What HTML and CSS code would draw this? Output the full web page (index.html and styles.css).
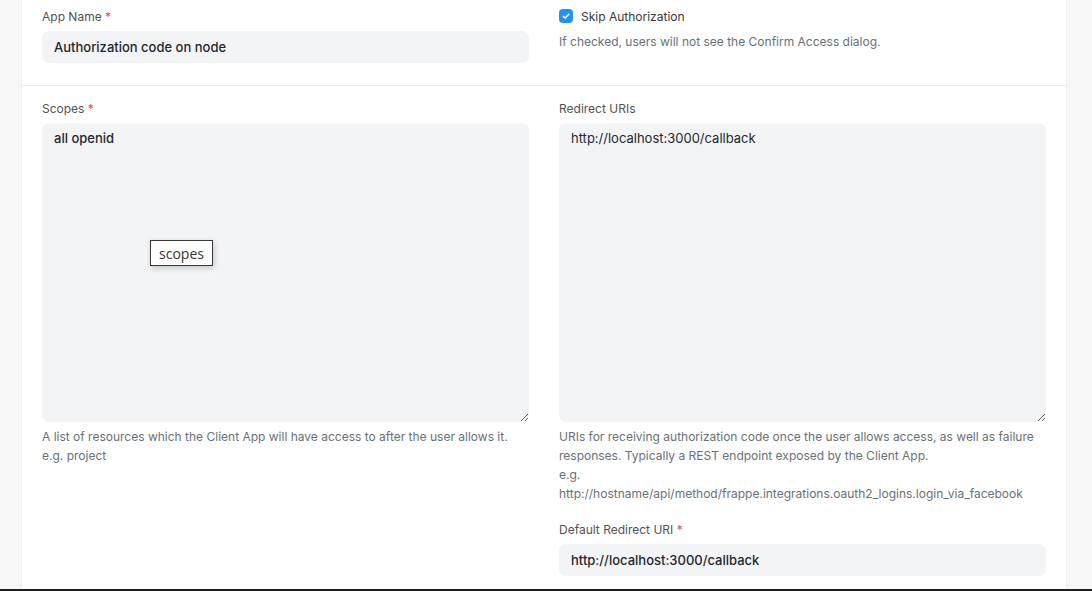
FILE: index.html
```html
<!DOCTYPE html>
<html>
<head>
<meta charset="utf-8">
<link rel="stylesheet" href="styles.css">
</head>
<body>
<div class="page">
  <div class="gutter"></div>
  <main class="card">
    <section class="section first">
      <div class="col">
        <div class="form-group">
          <label class="control-label">App Name <span class="req">*</span></label>
          <div class="input">Authorization code on node</div>
        </div>
      </div>
      <div class="col">
        <div class="form-group">
          <label class="check-row">
            <span class="checkbox"><svg width="10" height="10" viewBox="0 0 10 10"><path d="M2.2 5.2 L4.2 7 L7.8 3.2" fill="none" stroke="#fff" stroke-width="1.5" stroke-linecap="round" stroke-linejoin="round"/></svg></span>
            <span class="check-label">Skip Authorization</span>
          </label>
          <p class="help">If checked, users will not see the Confirm Access dialog.</p>
        </div>
      </div>
    </section>
    <section class="section">
      <div class="col">
        <div class="form-group">
          <label class="control-label">Scopes <span class="req">*</span></label>
          <div class="ta-wrap">
            <textarea class="textarea" readonly>all openid</textarea>
            <div class="tooltip">scopes</div>
          </div>
          <p class="help">A list of resources which the Client App will have access to after the user allows it.<br>e.g. project</p>
        </div>
      </div>
      <div class="col">
        <div class="form-group">
          <label class="control-label">Redirect URIs</label>
          <textarea class="textarea light" readonly>http://localhost:3000/callback</textarea>
          <p class="help">URIs for receiving authorization code once the user allows access, as well as failure responses. Typically a REST endpoint exposed by the Client App.<br>e.g.<br>http://hostname/api/method/frappe.integrations.oauth2_logins.login_via_facebook</p>
        </div>
        <div class="form-group spaced">
          <label class="control-label">Default Redirect URI <span class="req">*</span></label>
          <div class="input">http://localhost:3000/callback</div>
        </div>
      </div>
    </section>
  </main>
  <div class="gutter-r"></div>
</div>
<div class="bottom-bar"></div>
</body>
</html>
```
FILE: styles.css
```css
html, body {
  margin: 0;
  padding: 0;
  height: 591px;
  overflow: hidden;
  background: #f8f8f8;
  font-family: Inter, "Liberation Sans", sans-serif;
  color: #1f272e;
}
.page {
  display: flex;
  height: 589px;
  overflow: hidden;
}
.gutter { width: 21px; flex: none; }
.gutter-r { flex: 1; }
.card {
  width: 1044px;
  flex: none;
  background: #fff;
  border-left: 1px solid #ededed;
  border-right: 1px solid #ededed;
}
.section {
  display: grid;
  grid-template-columns: 1fr 1fr;
  column-gap: 30px;
  padding: 13px 20px 22px 20px;
  border-bottom: 1px solid #ededed;
}
.section.first {
  padding-top: 7px;
}
.col { min-width: 0; }
.form-group { display: flex; flex-direction: column; }
.form-group.spaced { margin-top: 17px; }
.control-label {
  font-size: 12px;
  line-height: 20px;
  color: #525252;
  margin-bottom: 4px;
}
.req { color: #e24c4c; }
.input {
  height: 32px;
  box-sizing: border-box;
  background: #f3f4f6;
  border-radius: 7px;
  padding: 0 12px;
  display: flex;
  align-items: center;
  font-size: 13px;
  font-weight: 500;
  color: #1f272e;
}
.ta-wrap { position: relative; display: flex; }
.textarea {
  display: block;
  width: 100%;
  height: 299px;
  box-sizing: border-box;
  background: #f3f4f6;
  border: none;
  border-radius: 7px;
  padding: 7px 12px;
  font-family: Inter, "Liberation Sans", sans-serif;
  font-size: 13px;
  line-height: 17px;
  font-weight: 500;
  color: #1f272e;
  resize: vertical;
  outline: none;
  margin: 0;
}
.textarea.light { font-weight: 400; }
.help {
  margin: 5px 0 0;
  font-size: 12px;
  line-height: 19px;
  color: #687178;
}
.check-row {
  display: flex;
  align-items: center;
  gap: 8px;
  height: 16px;
  margin-top: 1px;
}
.checkbox {
  width: 14px;
  height: 14px;
  border-radius: 4px;
  background: #2490ef;
  display: flex;
  align-items: center;
  justify-content: center;
}
.check-label {
  font-size: 12px;
  color: #383838;
}
.first .help { margin-top: 8px; }
.tooltip {
  position: absolute;
  left: 108px;
  top: 117px;
  width: 63px;
  height: 26px;
  box-sizing: border-box;
  border: 1px solid #3a3a3a;
  background: #fff;
  box-shadow: 1px 2px 6px rgba(0,0,0,0.2);
  font-family: "Open Sans", "DejaVu Sans", sans-serif;
  font-size: 14px;
  color: #333;
  display: flex;
  align-items: center;
  justify-content: center;
}
.bottom-bar {
  height: 2px;
  background: #1e1e1e;
}
```
